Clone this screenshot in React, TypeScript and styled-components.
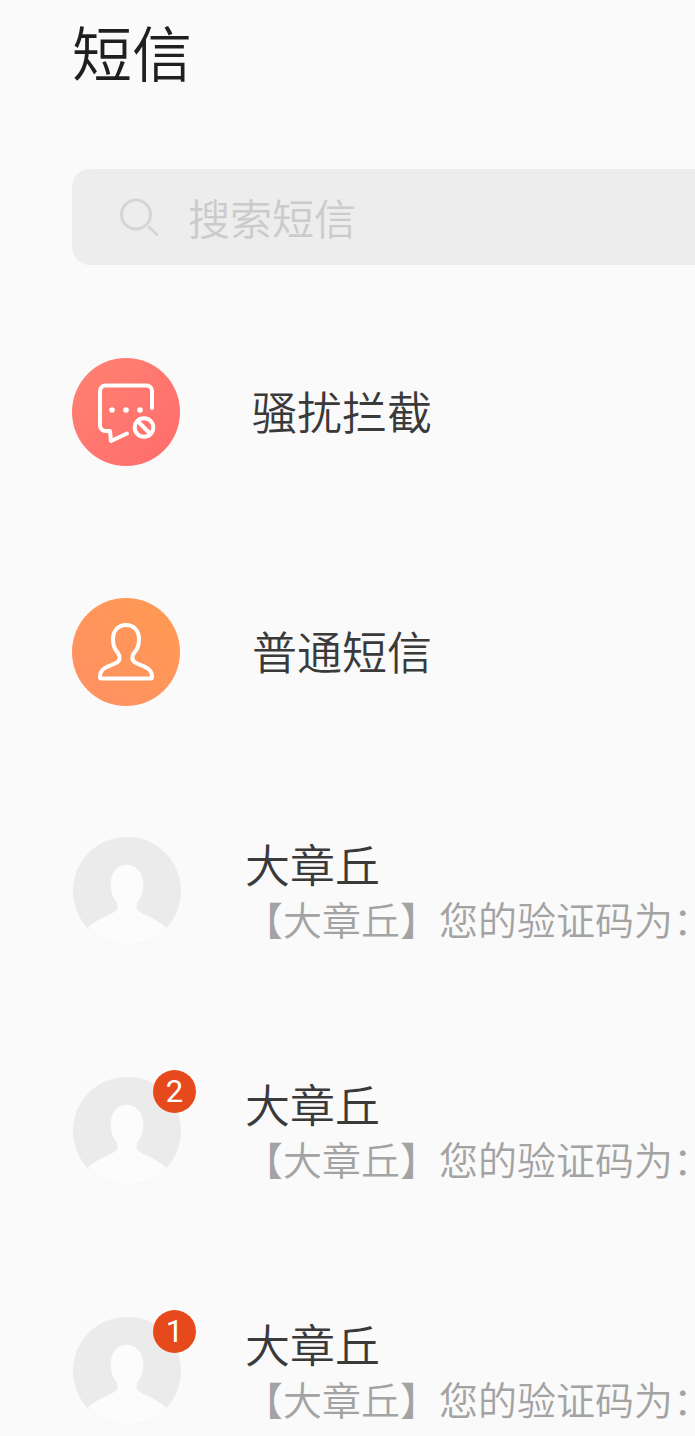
import React, { FC } from "react";
import styled, { createGlobalStyle } from "styled-components";

const Global = createGlobalStyle`
	html, body {
		margin: 0;
		padding: 0;
		background: #fafafa;
		overflow: hidden;
	}
`;

const Page = styled.div`
	width: 695px;
	height: 1436px;
	overflow: hidden;
	background: #fafafa;
	padding-left: 72px;
	box-sizing: border-box;
	font-family: "Noto Sans CJK SC", "Noto Sans", sans-serif;
	font-weight: 350;
`;

const Title = styled.h1`
	margin: 0;
	height: 106px;
	font-size: 60px;
	line-height: 102px;
	font-weight: 350;
	color: #1f1f1f;
`;

const SearchBar = styled.div`
	margin-top: 63px;
	width: 800px;
	height: 96px;
	border-radius: 18px;
	background: #ededed;
	display: flex;
	align-items: center;
	padding-left: 48px;
	box-sizing: border-box;
	gap: 28px;
`;

const SearchText = styled.span`
	font-size: 42px;
	line-height: 94px;
	color: #cbcbcb;
`;

const List = styled.div`
	margin-top: 93px;
	display: flex;
	flex-direction: column;
`;

const Row = styled.div`
	height: 240px;
	display: flex;
	align-items: flex-start;
	white-space: nowrap;
`;

const Circle = styled.div<{ $gradient:string }>`
	width: 108px;
	height: 108px;
	flex: none;
	border-radius: 50%;
	background: linear-gradient(${({ $gradient }) => $gradient});
	svg {
		display: block;
	}
`;

const ActionLabel = styled.span`
	margin-left: 72px;
	font-size: 45px;
	line-height: 105px;
	color: #3a3a3a;
`;

const ContactRow = styled(Row)`
	margin-top: -1px;
	margin-bottom: 1px;
	padding-left: 1px;
`;

const AvatarWrap = styled.div`
	position: relative;
	width: 108px;
	height: 108px;
	flex: none;
	svg {
		display: block;
	}
`;

const Badge = styled.span`
	position: absolute;
	top: -7px;
	right: -15px;
	width: 43px;
	height: 43px;
	border-radius: 50%;
	background: #e64a1c;
	color: #fff;
	font-family: Roboto, sans-serif;
	font-weight: 400;
	font-size: 31px;
	line-height: 43px;
	text-align: center;
`;

const ContactText = styled.div`
	margin-left: 64px;
	display: flex;
	flex-direction: column;
`;

const Name = styled.span`
	font-size: 45px;
	line-height: 53px;
	color: #3a3a3a;
`;

const Preview = styled.span`
	font-size: 39px;
	line-height: 52px;
	margin: 2px 0 0 -1px;
	color: #a3a3a3;
`;

const SearchIcon = () => (
	<svg width="40" height="40" viewBox="0 0 40 40" fill="none" stroke="#d5d5d5" strokeWidth="3" strokeLinecap="round">
		<circle cx="16" cy="17.5" r="14.5" />
		<path d="M29 30l8 7.5" />
	</svg>
);

const BlockIcon = () => (
	<svg width="108" height="108" viewBox="0 0 108 108" fill="none" stroke="#fff" strokeWidth="4" strokeLinecap="round" strokeLinejoin="round">
		<path d="M80 50V33a5.5 5.5 0 0 0-5.5-5.5H33.5A5.5 5.5 0 0 0 28 33v34.5a5.5 5.5 0 0 0 5.5 5.5H38l1 10 16-7.5" />
		<circle cx="40" cy="52" r="2.8" fill="#fff" stroke="none" />
		<circle cx="54" cy="52" r="2.8" fill="#fff" stroke="none" />
		<circle cx="68" cy="52" r="2.8" fill="#fff" stroke="none" />
		<circle cx="72" cy="69.5" r="9.3" />
		<path d="M66 63.5l12 12" />
	</svg>
);

const PersonIcon = () => (
	<svg width="108" height="108" viewBox="0 0 108 108" fill="none" stroke="#fff" strokeWidth="4" strokeLinejoin="round">
		<path d="M54 27C46 27 41 33 41 41C41 47 43 52 46 55C49 59 48 63 44 65C38 68 28 69 28 79Q28 80.5 29.5 80.5H78.5Q80 80.5 80 79C80 69 70 68 64 65C60 63 59 59 62 55C65 52 67 47 67 41C67 33 62 27 54 27Z" />
	</svg>
);

const PlaceholderAvatar = () => (
	<svg width="108" height="108" viewBox="0 0 108 108">
		<circle cx="54" cy="54" r="54" fill="#ebebeb" />
		<path
			d="M15 91C19 87 25 83 30 81C36 78 42 76 44 72C45.500 69 45 67 43 64C39 59 38 53 38 46C38 36 45 28 54 28C63 28 70 36 70 46C70 53 69 59 65 64C63 67 62.500 69 64 72C66 76 72 78 77 80.500C83 83 89 87 93 91A54 54 0 0 1 15 91Z"
			fill="#fcfcfc"
			stroke="#fcfcfc"
			strokeWidth="0.6"
		/>
	</svg>
);

const Contact:FC<{ badge?:number }> = ({ badge }) => (
	<ContactRow>
		<AvatarWrap>
			<PlaceholderAvatar />
			{badge ? <Badge>{badge}</Badge> : null}
		</AvatarWrap>
		<ContactText>
			<Name>大章丘</Name>
			<Preview>【大章丘】您的验证码为：</Preview>
		</ContactText>
	</ContactRow>
);

export default function App() {
	return (
		<Page>
			<Global />
			<Title>短信</Title>
			<SearchBar>
				<SearchIcon />
				<SearchText>搜索短信</SearchText>
			</SearchBar>
			<List>
				<Row>
					<Circle $gradient="135deg, #ff8272, #ff6c6c"><BlockIcon /></Circle>
					<ActionLabel>骚扰拦截</ActionLabel>
				</Row>
				<Row>
					<Circle $gradient="225deg, #ff9a52, #ff9064"><PersonIcon /></Circle>
					<ActionLabel>普通短信</ActionLabel>
				</Row>
				<Contact />
				<Contact badge={2} />
				<Contact badge={1} />
			</List>
		</Page>
	);
}
